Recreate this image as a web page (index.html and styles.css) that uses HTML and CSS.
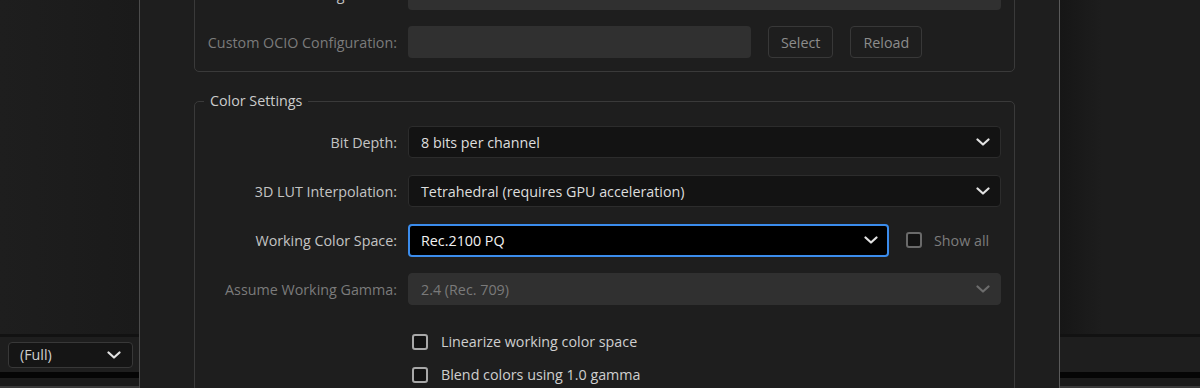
FILE: index.html
```html
<!DOCTYPE html>
<html lang="en">
<head>
    <meta charset="UTF-8">
    <meta name="viewport" content="width=device-width, initial-scale=1.0">
    <title>Project Settings - Color</title>
    <link rel="stylesheet" href="styles.css">
</head>
<body>
    <div class="screen">
        <!-- App panel behind the dialog (left) -->
        <aside class="app-panel">
            <div class="panel-fill"></div>
            <div class="panel-line"></div>
            <div class="panel-bar">
                <div class="res-select">
                    <span>(Full)</span>
                    <svg class="chevron" width="14" height="8" viewBox="0 0 14 8"><path d="M1.5 1.5 L7 6.5 L12.5 1.5" /></svg>
                </div>
            </div>
            <div class="panel-band"></div>
            <div class="panel-foot"></div>
        </aside>

        <section class="dialog">
            <fieldset class="group group-ocio">
                <div class="row">
                    <label class="row-label">OCIO Configuration:</label>
                    <div class="row-control">
                        <div class="text-field"></div>
                    </div>
                </div>
                <div class="row">
                    <label class="row-label disabled">Custom OCIO Configuration:</label>
                    <div class="row-control">
                        <div class="text-field short"></div>
                        <button class="btn">Select</button>
                        <button class="btn">Reload</button>
                    </div>
                </div>
            </fieldset>

            <fieldset class="group">
                <legend>Color Settings</legend>
                <div class="row">
                    <label class="row-label">Bit Depth:</label>
                    <div class="row-control">
                        <div class="select">
                            <span>8 bits per channel</span>
                            <svg class="chevron" width="14" height="8" viewBox="0 0 14 8"><path d="M1.5 1.5 L7 6.5 L12.5 1.5" /></svg>
                        </div>
                    </div>
                </div>
                <div class="row">
                    <label class="row-label">3D LUT Interpolation:</label>
                    <div class="row-control">
                        <div class="select">
                            <span>Tetrahedral (requires GPU acceleration)</span>
                            <svg class="chevron" width="14" height="8" viewBox="0 0 14 8"><path d="M1.5 1.5 L7 6.5 L12.5 1.5" /></svg>
                        </div>
                    </div>
                </div>
                <div class="row">
                    <label class="row-label">Working Color Space:</label>
                    <div class="row-control">
                        <div class="select focused">
                            <span>Rec.2100 PQ</span>
                            <svg class="chevron" width="14" height="8" viewBox="0 0 14 8"><path d="M1.5 1.5 L7 6.5 L12.5 1.5" /></svg>
                        </div>
                        <div class="check dim">
                            <span class="box"></span>
                            <span>Show all</span>
                        </div>
                    </div>
                </div>
                <div class="row">
                    <label class="row-label disabled">Assume Working Gamma:</label>
                    <div class="row-control">
                        <div class="select disabled">
                            <span>2.4 (Rec. 709)</span>
                            <svg class="chevron" width="14" height="8" viewBox="0 0 14 8"><path d="M1.5 1.5 L7 6.5 L12.5 1.5" /></svg>
                        </div>
                    </div>
                </div>
                <div class="check-list">
                    <div class="check">
                        <span class="box"></span>
                        <span>Linearize working color space</span>
                    </div>
                    <div class="check">
                        <span class="box"></span>
                        <span>Blend colors using 1.0 gamma</span>
                    </div>
                </div>
            </fieldset>
        </section>

        <!-- App panel behind the dialog (right) -->
        <aside class="app-panel right">
            <div class="panel-fill"></div>
            <div class="panel-line"></div>
            <div class="panel-bar"></div>
            <div class="panel-band"></div>
            <div class="panel-foot"></div>
        </aside>
    </div>
</body>
</html>
```

FILE: styles.css
```css
html, body {
    margin: 0;
    padding: 0;
    height: 100%;
    overflow: hidden;
}

body {
    font-family: "Open Sans", "Liberation Sans", sans-serif;
    font-size: 14.3px;
    background-color: #1c1c1c;
    color: #c6c6c6;
}

.screen {
    display: flex;
    height: 388px;
}

/* Background app panels */
.app-panel {
    width: 139px;
    display: flex;
    flex-direction: column;
    background: linear-gradient(to right, #1e1e1e, #1a1a1a);
}

.app-panel.right {
    width: 140px;
    background: linear-gradient(to right, #161616, #1d1d1d 30%, #1d1d1d);
}

.panel-fill {
    flex: 1;
}

.panel-line {
    height: 3px;
    background-color: #121212;
}

.panel-bar {
    height: 35px;
    background-color: #1e1e1e;
    display: flex;
    align-items: center;
    padding-left: 8px;
}

.panel-band {
    height: 6px;
    background-color: #050505;
}

.panel-foot {
    height: 8px;
    background-color: #1b1b1b;
    border-bottom: 2px solid #3a3a3a;
}

.res-select {
    width: 125px;
    height: 26px;
    border: 1px solid #383838;
    border-radius: 4px;
    background-color: #151515;
    display: flex;
    align-items: center;
    justify-content: space-between;
    padding: 0 11px 0 11px;
    box-sizing: border-box;
    color: #cfcfcf;
}

/* Dialog */
.dialog {
    width: 919px;
    border-left: 1px solid #4c4c4c;
    border-right: 1px solid #5a5a5a;
    background-color: #1e1e1e;
    overflow: hidden;
}

.group {
    margin: 0 44px 0 54px;
    padding: 15px 13px 0 0;
    border: 1px solid #3a3a3a;
    border-radius: 5px;
    display: flex;
    flex-direction: column;
    gap: 17px;
    min-width: 0;
}

.group-ocio {
    margin-top: -49px;
    padding-top: 26px;
    padding-bottom: 13px;
    gap: 16px;
    margin-bottom: 19px;
}

.group legend {
    margin-left: 9px;
    padding: 0 6px 0 6px;
    color: #cccccc;
    line-height: 20px;
}

.row {
    display: flex;
    align-items: center;
    height: 32px;
}

.row-label {
    width: 202px;
    flex-shrink: 0;
    text-align: right;
    margin-right: 11px;
    color: #c4c4c4;
}

.row-label.disabled {
    color: #7b7b7b;
}

.row-control {
    flex: 1;
    display: flex;
    align-items: center;
    gap: 17px;
    height: 32px;
}

.text-field {
    flex: 1;
    height: 32px;
    border-radius: 4px;
    background-color: #303030;
}

.text-field.short {
    flex: none;
    width: 343px;
}

.btn {
    height: 32px;
    padding: 0 12px;
    border: 1px solid #383838;
    border-radius: 4px;
    background-color: transparent;
    color: #8c8c8c;
    font-family: inherit;
    font-size: 14.3px;
}

.select {
    flex: 1;
    height: 32px;
    box-sizing: border-box;
    border: 1px solid #2c2c2c;
    border-radius: 4px;
    background-color: #131313;
    color: #dedede;
    display: flex;
    align-items: center;
    justify-content: space-between;
    padding: 0 10px 0 12px;
}

.select.focused {
    flex: none;
    width: 481px;
    height: 33px;
    border: 2px solid #3b8cec;
    background-color: #000000;
    color: #f2f2f2;
    padding: 0 9px 0 11px;
}

.select.disabled {
    border-color: #303030;
    background-color: #303030;
    color: #7a7a7a;
}

.chevron {
    fill: none;
    stroke: #e2e2e2;
    stroke-width: 2.2;
    stroke-linecap: round;
    stroke-linejoin: round;
}

.select.disabled .chevron {
    stroke: #6c6c6c;
}

/* Checkboxes */
.check {
    display: flex;
    align-items: center;
    gap: 13px;
    color: #cfcfcf;
}

.check .box {
    width: 16px;
    height: 16px;
    box-sizing: border-box;
    border: 2px solid #a8a8a8;
    border-radius: 3px;
    background-color: #121212;
}

.check.dim {
    gap: 12px;
    color: #7c7c7c;
}

.check.dim .box {
    border-color: #6a6a6a;
}

.check-list {
    display: flex;
    flex-direction: column;
    padding-left: 217px;
    margin-top: 3px;
}

.check-list .check {
    height: 33px;
}
```
